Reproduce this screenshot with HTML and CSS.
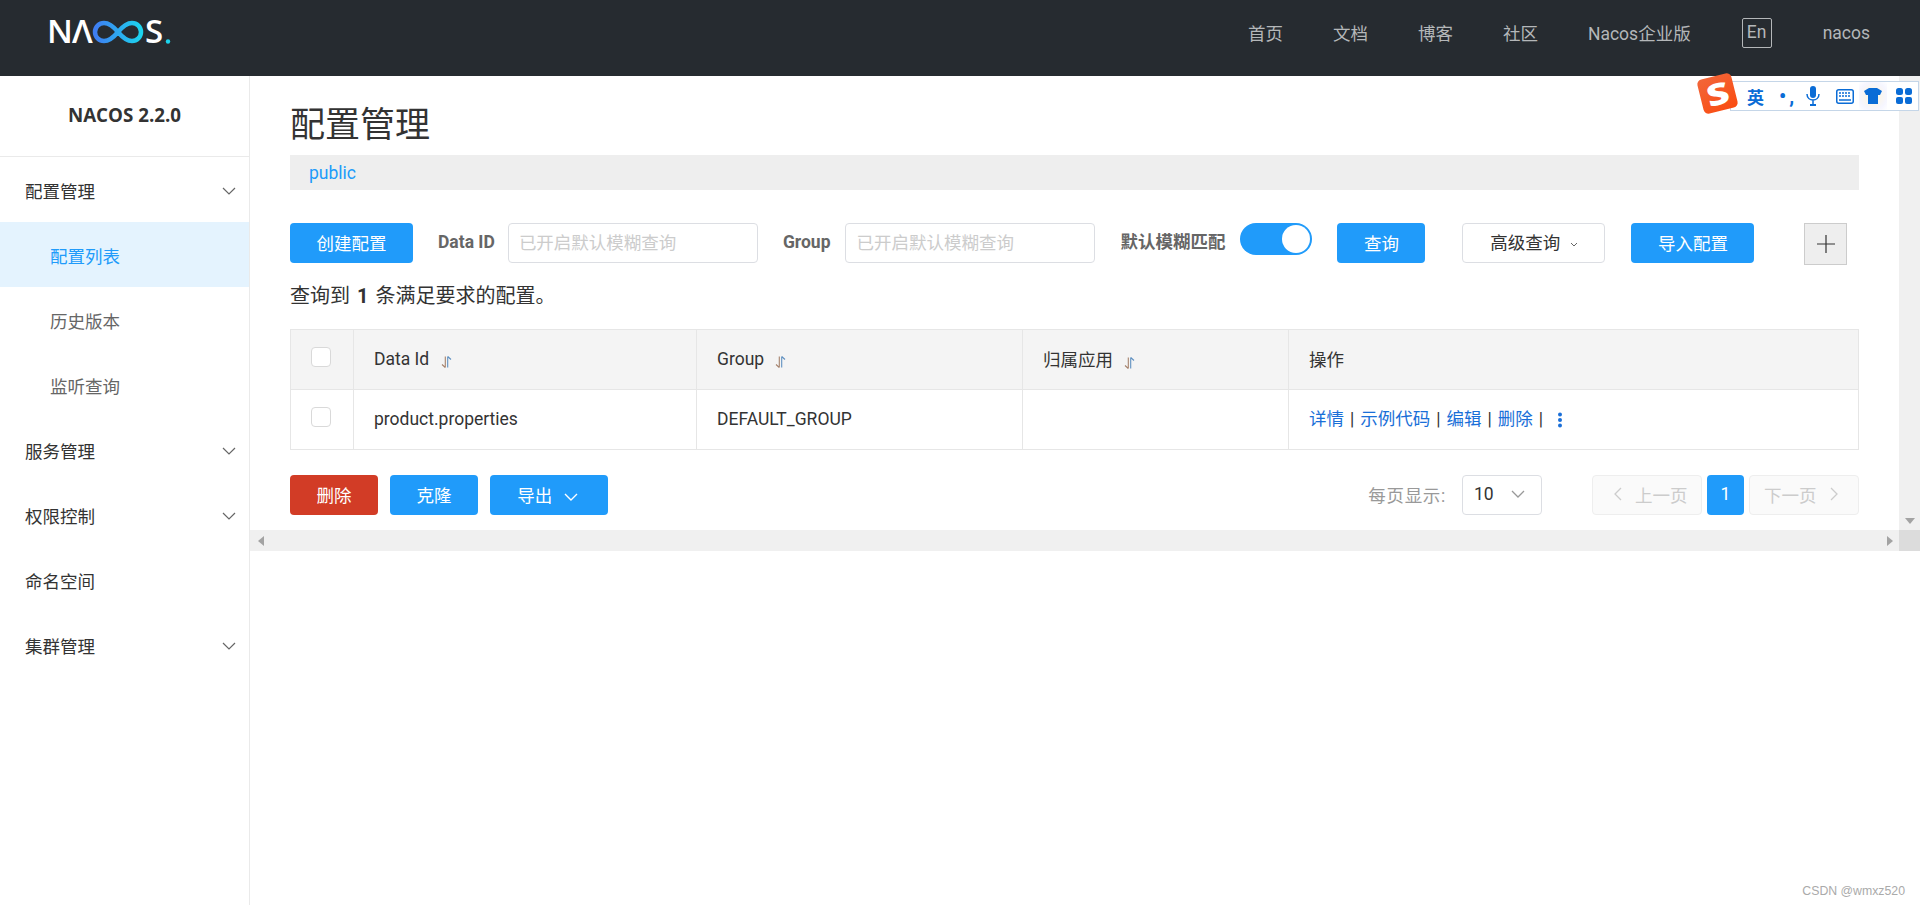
FILE: index.html
```html
<!DOCTYPE html>
<html lang="en">

<head>
    <meta charset="UTF-8">
    <meta name="viewport" content="width=device-width, initial-scale=1.0">
    <title>Nacos</title>
    <link rel="stylesheet" href="styles.css">
</head>

<body>
    <header class="topbar">
        <svg class="logo" viewBox="-6 -12 130 48" width="130" height="48" role="img" aria-label="NACOS.">
            <defs>
                <linearGradient id="logoGrad" x1="0" x2="1" y1="0" y2="0">
                    <stop offset="0" stop-color="#3f7df2" />
                    <stop offset="1" stop-color="#1cd4ee" />
                </linearGradient>
            </defs>
            <text class="logo-letter" x="-3" y="23">N</text>
            <text class="logo-letter" x="22" y="23">&#923;</text>
            <path d="M68 12C63 6 59 3 54 3A9 9 0 0 0 54 21C59 21 63 18 68 12C73 6 77 3 82 3A9 9 0 0 1 82 21C77 21 73 18 68 12" fill="none" stroke="url(#logoGrad)" stroke-width="4.5" />
            <text class="logo-letter" x="95" y="23">S</text>
            <circle cx="118" cy="21.5" r="2.2" fill="#1cd4ee" />
        </svg>
        <nav class="topnav">
            <a>首页</a>
            <a>文档</a>
            <a>博客</a>
            <a>社区</a>
            <a>Nacos企业版</a>
            <a class="lang">En</a>
            <a>nacos</a>
        </nav>
    </header>

    <div class="layout">
        <aside class="sidebar">
            <div class="version">NACOS 2.2.0</div>
            <ul class="menu">
                <li class="menu-item">配置管理
                    <svg class="chev" viewBox="0 0 14 8" width="14" height="8"><path d="M1 1l6 6 6-6" /></svg>
                </li>
                <li class="menu-item sub active">配置列表</li>
                <li class="menu-item sub">历史版本</li>
                <li class="menu-item sub">监听查询</li>
                <li class="menu-item">服务管理
                    <svg class="chev" viewBox="0 0 14 8" width="14" height="8"><path d="M1 1l6 6 6-6" /></svg>
                </li>
                <li class="menu-item">权限控制
                    <svg class="chev" viewBox="0 0 14 8" width="14" height="8"><path d="M1 1l6 6 6-6" /></svg>
                </li>
                <li class="menu-item">命名空间</li>
                <li class="menu-item">集群管理
                    <svg class="chev" viewBox="0 0 14 8" width="14" height="8"><path d="M1 1l6 6 6-6" /></svg>
                </li>
            </ul>
        </aside>

        <main class="main">
            <div class="pane">
                <div class="page">
                    <h1 class="page-title">配置管理</h1>
                    <div class="namespace"><a>public</a></div>

                    <div class="filters">
                        <button class="btn primary create">创建配置</button>
                        <label class="field-label id-label">Data ID</label>
                        <input class="field" placeholder="已开启默认模糊查询">
                        <label class="field-label group-label">Group</label>
                        <input class="field" placeholder="已开启默认模糊查询">
                        <label class="field-label fuzzy-label">默认模糊匹配</label>
                        <span class="switch"><span class="knob"></span></span>
                        <button class="btn primary query">查询</button>
                        <button class="btn advanced">高级查询
                            <svg viewBox="0 0 8 5" width="8" height="5"><path d="M1 1l3 3 3-3" /></svg>
                        </button>
                        <button class="btn primary import">导入配置</button>
                        <button class="plus">
                            <svg viewBox="0 0 20 20" width="20" height="20"><path d="M10 1v18M1 10h18" /></svg>
                        </button>
                    </div>

                    <p class="result">查询到 <b>1</b> 条满足要求的配置。</p>

                    <table class="grid">
                        <colgroup>
                            <col class="col-check">
                            <col class="col-id">
                            <col class="col-group">
                            <col class="col-app">
                            <col>
                        </colgroup>
                        <thead>
                            <tr>
                                <th class="check-cell"><span class="checkbox"></span></th>
                                <th>Data Id
                                    <svg class="sort" viewBox="0 0 11 12" width="11" height="12"><path class="sort-down" d="M4.3 .5v11M1 8.5l3.3 3" /><path class="sort-up" d="M6.7 11.5V.5M6.7 .5l3.3 3" /></svg>
                                </th>
                                <th>Group
                                    <svg class="sort" viewBox="0 0 11 12" width="11" height="12"><path class="sort-down" d="M4.3 .5v11M1 8.5l3.3 3" /><path class="sort-up" d="M6.7 11.5V.5M6.7 .5l3.3 3" /></svg>
                                </th>
                                <th>归属应用
                                    <svg class="sort" viewBox="0 0 11 12" width="11" height="12"><path class="sort-down" d="M4.3 .5v11M1 8.5l3.3 3" /><path class="sort-up" d="M6.7 11.5V.5M6.7 .5l3.3 3" /></svg>
                                </th>
                                <th>操作</th>
                            </tr>
                        </thead>
                        <tbody>
                            <tr>
                                <td class="check-cell"><span class="checkbox"></span></td>
                                <td>product.properties</td>
                                <td>DEFAULT_GROUP</td>
                                <td></td>
                                <td class="ops">
                                    <a>详情</a><i>|</i><a>示例代码</a><i>|</i><a>编辑</a><i>|</i><a>删除</a><i>|</i>
                                    <svg class="more" viewBox="0 0 6 16" width="6" height="16"><circle cx="3" cy="2.5" r="2" /><circle cx="3" cy="8" r="2" /><circle cx="3" cy="13.5" r="2" /></svg>
                                </td>
                            </tr>
                        </tbody>
                    </table>

                    <div class="footer">
                        <div class="actions">
                            <button class="btn danger">删除</button>
                            <button class="btn primary">克隆</button>
                            <button class="btn primary export">导出
                                <svg viewBox="0 0 14 8" width="14" height="8"><path d="M1 1l6 6 6-6" /></svg>
                            </button>
                        </div>
                        <div class="pager">
                            <span class="page-size-label">每页显示:</span>
                            <span class="select">10
                                <svg viewBox="0 0 14 8" width="14" height="8"><path d="M1 1l6 6 6-6" /></svg>
                            </span>
                            <button class="page-btn prev">
                                <svg viewBox="0 0 8 14" width="8" height="14"><path d="M7 1L1 7l6 6" /></svg>上一页
                            </button>
                            <button class="page-num">1</button>
                            <button class="page-btn next">下一页
                                <svg viewBox="0 0 8 14" width="8" height="14"><path d="M1 1l6 6-6 6" /></svg>
                            </button>
                        </div>
                    </div>
                </div>
                <div class="vscroll">
                    <span class="arrow-down"></span>
                </div>
            </div>
            <div class="hscroll">
                <div class="hscroll-track">
                    <span class="arrow-left"></span>
                    <span class="arrow-right"></span>
                </div>
                <div class="corner"></div>
            </div>
            <div class="watermark">CSDN @wmxz520</div>
        </main>
    </div>

    <div class="ime">
        <span class="ime-logo"><span>S</span></span>
        <span class="ime-text">英</span>
        <span class="ime-punct">•,</span>
        <svg class="ime-icon mic" viewBox="0 0 16 20" width="16" height="20">
            <rect x="5" y="0" width="6" height="12" rx="3" fill="#0a6cd6" />
            <path d="M2 8c0 8 12 8 12 0M8 14v4" fill="none" stroke="#0a6cd6" stroke-width="1.5" />
            <rect x="5" y="18" width="6" height="2" fill="#0a6cd6" />
        </svg>
        <svg class="ime-icon keys" viewBox="0 0 18 15" width="18" height="15">
            <rect x="0.75" y="0.75" width="16.5" height="13.5" rx="2" fill="none" stroke="#0a6cd6" stroke-width="1.5" />
            <path d="M3 4h12M3 7h12" stroke="#0a6cd6" stroke-width="1.5" stroke-dasharray="2 1" />
            <path d="M3 11h12" stroke="#0a6cd6" stroke-width="1.5" />
        </svg>
        <span class="ime-glow">
            <svg viewBox="0 0 18 16" width="18" height="16"><path d="M5 0h8l5 3-2 4h-2v9H4V7H2L0 3z" fill="#0a6cd6" /></svg>
        </span>
        <svg class="ime-icon apps" viewBox="0 0 16 16" width="16" height="16" fill="#0a6cd6">
            <rect x="0" y="0" width="7" height="7" rx="2.5" />
            <rect x="9" y="0" width="7" height="7" rx="2.5" />
            <rect x="0" y="9" width="7" height="7" rx="2" />
            <rect x="9" y="9" width="7" height="7" rx="2" />
        </svg>
    </div>
</body>

</html>
```

FILE: styles.css
```css
* {
    box-sizing: border-box;
}

html,
body {
    height: 100%;
}

body {
    margin: 0;
    display: flex;
    flex-direction: column;
    overflow: hidden;
    font-family: Roboto, "Noto Sans CJK SC", sans-serif;
    font-size: 17.5px;
    color: #333;
    background-color: #fff;
}

button {
    font-family: inherit;
    font-size: inherit;
    border: none;
    padding: 0;
}

/* top bar */
.topbar {
    height: 76px;
    flex: none;
    display: flex;
    align-items: center;
    justify-content: space-between;
    padding: 0 50px 0 44px;
    background-color: #262b30;
}

.logo {
    margin-bottom: 12px;
}

.logo-letter {
    font-family: "Open Sans", sans-serif;
    font-size: 33px;
    font-weight: 600;
    fill: #fff;
}

.topnav {
    display: flex;
    align-items: center;
    gap: 50px;
    margin-bottom: 11px;
    color: #b4b7b9;
}

.lang {
    width: 30px;
    height: 30px;
    line-height: 26px;
    text-align: center;
    border: 1px solid #b4b7b9;
    border-radius: 2px;
    margin: 0 1px;
}

/* sidebar */
.layout {
    flex: 1;
    display: flex;
    min-height: 0;
}

.sidebar {
    width: 250px;
    flex: none;
    border-right: 1px solid #eaeaea;
}

.version {
    height: 81px;
    line-height: 78px;
    text-align: center;
    font-size: 18.75px;
    font-weight: 700;
    font-family: "Open Sans", sans-serif;
    border-bottom: 1px solid #eaeaea;
}

.menu {
    list-style: none;
    margin: 0;
    padding: 0;
}

.menu-item {
    height: 65px;
    display: flex;
    align-items: center;
    justify-content: space-between;
    padding: 2px 13px 0 25px;
}

.menu-item.sub {
    padding-left: 50px;
    color: #666;
}

.menu-item.active {
    color: #209bfa;
    background-color: #e4f3fe;
}

.chev path {
    fill: none;
    stroke: #666;
    stroke-width: 1.2;
}

/* content */
.main {
    flex: 1;
    min-width: 0;
    position: relative;
}

.pane {
    height: 454px;
    display: flex;
}

.page {
    flex: 1;
    min-width: 0;
    padding: 27px 40px 0 40px;
}

.page-title {
    margin: 0 0 6px 0;
    font-size: 35px;
    line-height: 46px;
    font-weight: 400;
}

.namespace {
    height: 35px;
    line-height: 37px;
    padding-left: 19px;
    color: #209bfa;
    background-color: #eee;
}

.filters {
    display: flex;
    align-items: flex-start;
    margin-top: 33px;
    height: 42px;
}

.btn {
    height: 40px;
    padding-bottom: 2px;
    border-radius: 4px;
    color: #333;
    background-color: #fff;
    flex: none;
}

.btn.primary {
    color: #fff;
    background-color: #209bfa;
}

.btn.danger {
    width: 88px;
    color: #fff;
    background-color: #d23c26;
}

.create {
    width: 123px;
}

.field-label {
    font-weight: 700;
    line-height: 38px;
    color: #666;
    flex: none;
}

.id-label {
    margin: 0 13px 0 25px;
}

.group-label {
    margin: 0 15px 0 25px;
}

.fuzzy-label {
    margin: 0 15px 0 25px;
}

.field {
    width: 250px;
    height: 40px;
    flex: none;
    padding: 0 10px;
    font-family: inherit;
    font-size: inherit;
    border: 1px solid #dcdee3;
    border-radius: 4px;
}

.field::placeholder {
    color: #ccc;
    opacity: 1;
}

.switch {
    width: 72px;
    height: 32px;
    flex: none;
    display: flex;
    justify-content: flex-end;
    padding: 2px;
    border-radius: 16px;
    background-color: #209bfa;
}

.knob {
    width: 28px;
    height: 28px;
    border-radius: 50%;
    background-color: #fff;
}

.query {
    width: 88px;
    margin-left: 25px;
}

.advanced {
    width: 143px;
    margin-left: 37px;
    padding-bottom: 4px;
    border: 1px solid #dcdee3;
}

.advanced svg {
    margin: 0 0 2px 5px;
}

.advanced path {
    fill: none;
    stroke: #666;
}

.import {
    width: 123px;
    margin-left: 26px;
}

.plus {
    width: 43px;
    height: 42px;
    flex: none;
    margin-left: 50px;
    display: flex;
    align-items: center;
    justify-content: center;
    background-color: #eee;
    border: 1px solid #ccc;
}

.plus path {
    fill: none;
    stroke: #333;
    stroke-width: 1.2;
}

.result {
    margin: 18px 0 20px 0;
    font-size: 20px;
    line-height: 26px;
}

.result b {
    margin: 0 2px;
}

/* table */
.grid {
    width: 100%;
    table-layout: fixed;
    border-collapse: collapse;
}

.col-check {
    width: 63px;
}

.col-id {
    width: 343px;
}

.col-group {
    width: 326px;
}

.col-app {
    width: 266px;
}

.grid th,
.grid td {
    height: 60px;
    padding: 0 0 2px 20px;
    text-align: left;
    font-weight: 400;
    border: 1px solid #e6e6e6;
}

.grid th {
    background-color: #f4f4f4;
}

.grid .check-cell {
    padding: 0;
    text-align: center;
}

.grid .ops {
    padding-bottom: 4px;
}

.checkbox {
    display: inline-block;
    width: 20px;
    height: 20px;
    margin: 0 2px 6px 0;
    vertical-align: middle;
    background-color: #fff;
    border: 1px solid #d9d9d9;
    border-radius: 4px;
}

.sort {
    margin-left: 7px;
    vertical-align: -3px;
}

.sort path {
    fill: none;
    stroke-width: 1.1;
}

.sort-down {
    stroke: #a5826c;
}

.sort-up {
    stroke: #5f90c0;
}

.ops a {
    color: #1a6fd8;
}

.ops i {
    font-style: normal;
    margin: 0 6px;
}

.more {
    margin-left: 4px;
    vertical-align: -3px;
    fill: #1a6fd8;
}

/* footer row */
.footer {
    display: flex;
    justify-content: space-between;
    margin-top: 25px;
}

.actions {
    display: flex;
    gap: 12px;
}

.actions .btn {
    width: 88px;
}

.actions .export {
    width: 118px;
    padding-right: 3px;
}

.export svg {
    margin-left: 7px;
    vertical-align: 1px;
}

.export path {
    fill: none;
    stroke: #fff;
    stroke-width: 1.4;
}

.pager {
    display: flex;
    align-items: center;
}

.page-size-label {
    color: #999;
    margin-right: 16px;
    padding-bottom: 2px;
    letter-spacing: 0.7px;
}

.select {
    width: 80px;
    height: 40px;
    display: flex;
    align-items: center;
    justify-content: space-between;
    padding: 0 16px 2px 11px;
    margin-right: 50px;
    border: 1px solid #dcdee3;
    border-radius: 4px;
}

.select path,
.page-btn path {
    fill: none;
    stroke: #999;
    stroke-width: 1.3;
}

.page-btn path {
    stroke: #ccc;
}

.page-btn {
    width: 110px;
    height: 40px;
    display: flex;
    align-items: center;
    gap: 13px;
    padding-bottom: 2px;
    color: #ccc;
    background-color: #fafafa;
    border: 1px solid #eee;
    border-radius: 4px;
}

.prev {
    padding-left: 21px;
}

.next {
    padding-left: 14px;
}

.page-num {
    width: 37px;
    height: 40px;
    margin: 0 5px;
    padding-bottom: 2px;
    color: #fff;
    background-color: #209bfa;
    border-radius: 4px;
}

/* fake scrollbars of the inner frame */
.vscroll {
    width: 21px;
    flex: none;
    display: flex;
    flex-direction: column;
    justify-content: flex-end;
    align-items: center;
    padding-bottom: 6px;
    background-color: #f0f0f0;
}

.arrow-down {
    border: 5px solid transparent;
    border-top: 6px solid #a3a3a3;
    border-bottom: 0;
}

.hscroll {
    height: 21px;
    display: flex;
}

.hscroll-track {
    flex: 1;
    display: flex;
    justify-content: space-between;
    align-items: center;
    padding: 0 6px 0 8px;
    background-color: #f0f0f0;
}

.arrow-left {
    border: 5px solid transparent;
    border-right: 6px solid #a3a3a3;
    border-left: 0;
}

.arrow-right {
    border: 5px solid transparent;
    border-left: 6px solid #a3a3a3;
    border-right: 0;
}

.corner {
    width: 21px;
    background-color: #dcdcdc;
}

.watermark {
    position: absolute;
    right: 15px;
    bottom: 7px;
    font-family: "Liberation Sans", sans-serif;
    font-size: 12.3px;
    color: #aaa;
}

/* input method toolbar floating over the page */
.ime {
    position: absolute;
    left: 1730px;
    top: 81px;
    width: 189px;
    height: 30px;
    display: flex;
    align-items: center;
    padding-left: 16px;
    background-color: #fff;
    border: 1px solid #c5d6e8;
}

.ime-logo {
    position: absolute;
    left: -31px;
    top: -6px;
    width: 35px;
    height: 35px;
    display: flex;
    align-items: center;
    justify-content: center;
    border-radius: 5px;
    background: linear-gradient(160deg, #f2663a, #fa4c10);
    transform: rotate(-14deg);
}

.ime-logo span {
    font-family: "Open Sans", sans-serif;
    font-size: 30px;
    font-weight: 800;
    line-height: 35px;
    color: #fff;
    transform: scaleX(1.3);
}

.ime-text {
    font-size: 17px;
    font-weight: 700;
    color: #0a6cd6;
}

.ime-punct {
    width: 20px;
    margin-left: 15px;
    font-size: 20px;
    line-height: 20px;
    letter-spacing: 3px;
    font-weight: 700;
    color: #0a6cd6;
}

.ime-icon.mic {
    margin-left: 6px;
}

.ime-icon.keys {
    margin-left: 15px;
}

.ime-glow {
    width: 28px;
    height: 28px;
    margin-left: 5px;
    display: flex;
    align-items: center;
    justify-content: center;
    background: radial-gradient(circle, #fff6d8, #f6f6ff 70%, #fff);
}

.ime-icon.apps {
    margin-left: 9px;
}
```
